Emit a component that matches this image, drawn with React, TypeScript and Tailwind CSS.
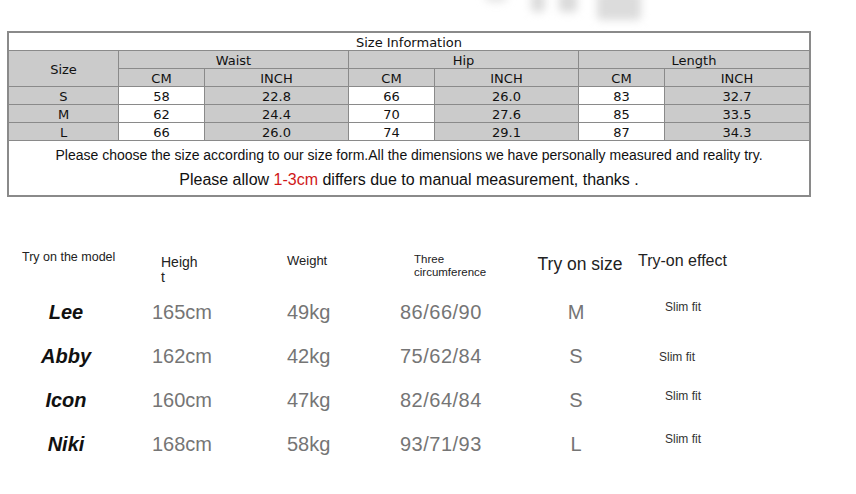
import React from "react"

const tableFont = { fontFamily: '"DejaVu Sans", Verdana, sans-serif' }
const arial = { fontFamily: '"Liberation Sans", Arial, sans-serif' }

const sizes = [
  { s: "S", w: ["58", "22.8"], h: ["66", "26.0"], l: ["83", "32.7"] },
  { s: "M", w: ["62", "24.4"], h: ["70", "27.6"], l: ["85", "33.5"] },
  { s: "L", w: ["66", "26.0"], h: ["74", "29.1"], l: ["87", "34.3"] },
]

const models = [
  { name: "Lee", height: "165cm", weight: "49kg", three: "86/66/90", size: "M", fit: "pt-0 pb-[10px] pl-[35px]" },
  { name: "Abby", height: "162cm", weight: "42kg", three: "75/62/84", size: "S", fit: "pt-[2px] pb-0 pl-[29px]" },
  { name: "Icon", height: "160cm", weight: "47kg", three: "82/64/84", size: "S", fit: "pt-0 pb-[8px] pl-[35px]" },
  { name: "Niki", height: "168cm", weight: "58kg", three: "93/71/93", size: "L", fit: "pt-0 pb-[10px] pl-[35px]" },
]

const gray = "bg-[#cbcbcb] h-[17px] leading-[19px] text-center"
const white = "bg-white h-[17px] leading-[19px] text-center"

export default function App() {
  return (
    <div className="relative w-[856px] h-[494px] overflow-hidden bg-white text-black">
      {/* blurred watermark at the top */}
      <div className="absolute left-[485px] top-[-8px] flex items-start blur-[4px]">
        <div className="w-[22px] h-[10px] rounded-full bg-[#e4e4e4]" />
        <div className="w-[14px] h-[20px] rounded bg-[#dcdcdc] ml-[24px]" />
        <div className="w-[18px] h-[20px] rounded bg-[#dadada] ml-[14px]" />
        <div className="w-[44px] h-[28px] rounded bg-[#dcdcdc] ml-[20px]" />
      </div>

      <div className="pt-[31px] pl-[7px]">
        <div
          className="w-[804px] grid grid-cols-[109px_85px_143px_85px_143px_85px_144px] gap-px bg-[#8a8a8a] border-2 border-[#8a8a8a] text-[13px] text-[#111]"
          style={tableFont}
        >
          <div className={`${white} col-span-7`}>Size Information</div>

          <div className="bg-[#cbcbcb] row-span-2 flex items-center justify-center pt-[2px]">Size</div>
          <div className={`${gray} col-span-2`}>Waist</div>
          <div className={`${gray} col-span-2`}>Hip</div>
          <div className={`${gray} col-span-2`}>Length</div>

          <div className={gray}>CM</div>
          <div className={gray}>INCH</div>
          <div className={gray}>CM</div>
          <div className={gray}>INCH</div>
          <div className={gray}>CM</div>
          <div className={gray}>INCH</div>

          {sizes.map((r) => (
            <React.Fragment key={r.s}>
              <div className={gray}>{r.s}</div>
              <div className={white}>{r.w[0]}</div>
              <div className={gray}>{r.w[1]}</div>
              <div className={white}>{r.h[0]}</div>
              <div className={gray}>{r.h[1]}</div>
              <div className={white}>{r.l[0]}</div>
              <div className={gray}>{r.l[1]}</div>
            </React.Fragment>
          ))}

          <div className="col-span-7 bg-white h-[54px] flex flex-col items-center pt-[6px]" style={arial}>
            <p className="text-[14px] leading-[17px] text-[#111]">
              Please choose the size according to our size form.All the dimensions we have personally measured and reality try.
            </p>
            <p className="text-[16px] leading-[18px] mt-[7px] text-[#111]">
              Please allow <span className="text-[#d01818]">1-3cm</span> differs due to manual measurement, thanks .
            </p>
          </div>
        </div>
      </div>

      <div className="mt-[53px]" style={arial}>
        <div className="grid grid-cols-[152px_135px_113px_130px_100px_1fr] items-start text-[#222]">
          <div className="pl-[22px] text-[12.5px] leading-[14px]">Try on the model</div>
          <div className="pl-[9px] pt-[5px] text-[14px] leading-[15px]">
            Heigh
            <br />t
          </div>
          <div className="pt-[4px] text-[13px] leading-[14px]">Weight</div>
          <div className="pl-[14px] pt-[3px] text-[11.5px] leading-[12.5px]">
            Three
            <br />
            circumference
          </div>
          <div className="text-center pt-[4px] text-[17.5px] leading-[20px]">Try on size</div>
          <div className="pl-[8px] pt-[2px] text-[16px] leading-[18px]">Try-on effect</div>
        </div>

        <div className="mt-[5px]">
          {models.map((m) => (
            <div key={m.name} className="grid grid-cols-[152px_135px_113px_130px_100px_1fr] items-center h-[44px]">
              <div className="w-[132px] text-center text-[20px] font-bold italic text-[#111]">{m.name}</div>
              <div className="text-[20px] text-[#757575]">{m.height}</div>
              <div className="text-[20px] text-[#757575]">{m.weight}</div>
              <div className="text-[20px] text-[#757575] tracking-[0.5px]">{m.three}</div>
              <div className="text-center pr-[8px] text-[20px] text-[#757575]">{m.size}</div>
              <div className={`text-[12px] leading-[14px] text-[#333] ${m.fit}`}>Slim fit</div>
            </div>
          ))}
        </div>
      </div>
    </div>
  )
}
